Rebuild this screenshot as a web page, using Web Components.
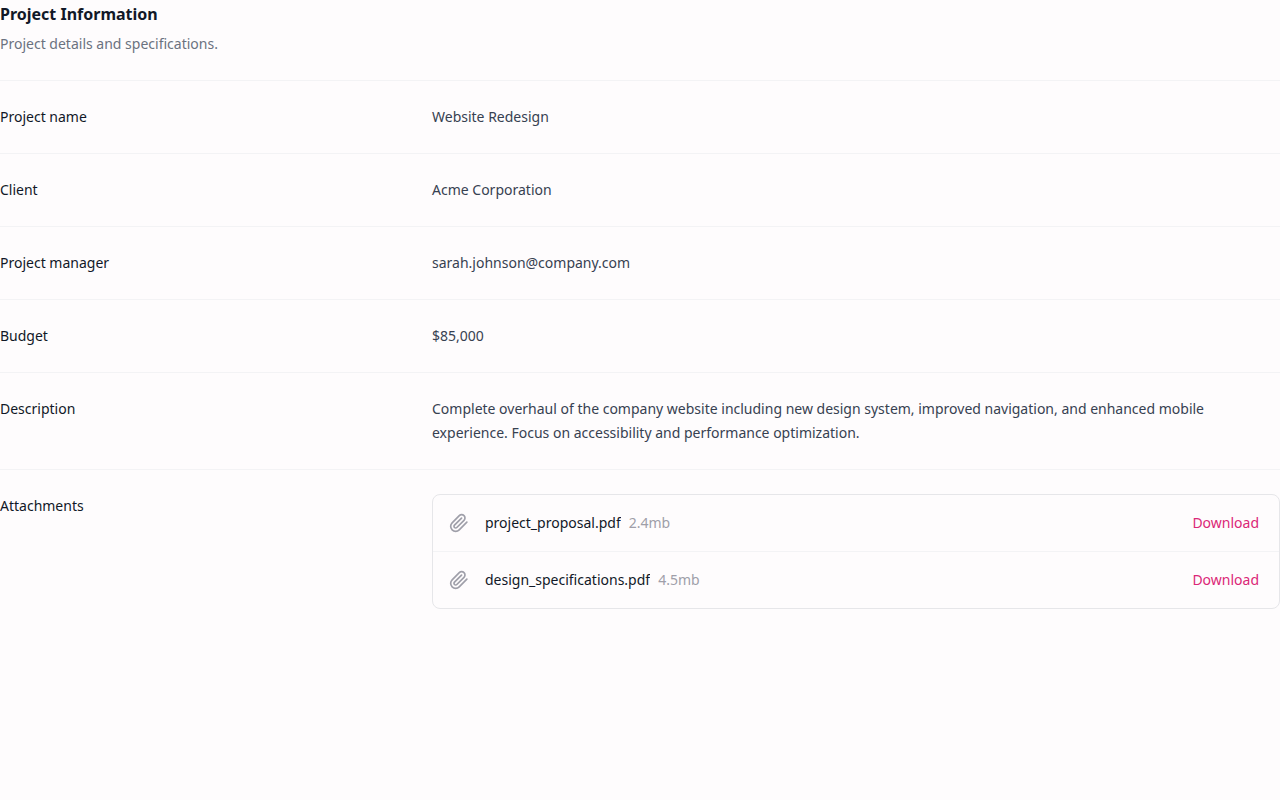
<!DOCTYPE html>
<html lang="en">
<head>
<meta charset="utf-8">
<meta name="viewport" content="width=device-width, initial-scale=1">
<title>Project Information</title>
<style>
  body {
    margin: 0;
    background: #fefcfd;
    color: #101828;
    font: 14px/24px "Noto Sans", sans-serif;
    --text-strong: #111827;
    --text-body: #374151;
    --text-muted: #6b7280;
    --text-faint: #9f9fa9;
    --line: #f3f3f5;
    --line-strong: #e6e6e9;
    --accent: #db2777;
  }
</style>
</head>
<body>
<project-details>
  <span slot="title">Project Information</span>
  <span slot="summary">Project details and specifications.</span>
  <detail-row label="Project name">Website Redesign</detail-row>
  <detail-row label="Client">Acme Corporation</detail-row>
  <detail-row label="Project manager">sarah.johnson@company.com</detail-row>
  <detail-row label="Budget">$85,000</detail-row>
  <detail-row label="Description">Complete overhaul of the company website including new design system, improved navigation, and enhanced mobile experience. Focus on accessibility and performance optimization.</detail-row>
  <detail-row label="Attachments">
    <attachment-list>
      <attachment-item name="project_proposal.pdf" size="2.4mb"></attachment-item>
      <attachment-item name="design_specifications.pdf" size="4.5mb"></attachment-item>
    </attachment-list>
  </detail-row>
</project-details>

<template id="project-details">
  <style>
    :host { display: block; }
    h3 { margin: 0; font-size: 16px; line-height: 28px; font-weight: 700; color: var(--text-strong); }
    p { margin: 4px 0 0; color: var(--text-muted); }
    .rows { margin-top: 24px; }
  </style>
  <header>
    <h3><slot name="title"></slot></h3>
    <p><slot name="summary"></slot></p>
  </header>
  <div class="rows"><slot></slot></div>
</template>

<template id="detail-row">
  <style>
    :host { display: block; border-top: 1px solid var(--line); }
    dl { display: grid; grid-template-columns: repeat(3, minmax(0, 1fr)); gap: 16px; margin: 0; padding: 24px 0; }
    dt { color: var(--text-strong); }
    dd { grid-column: span 2; margin: 0; color: var(--text-body); }
  </style>
  <dl><dt></dt><dd><slot></slot></dd></dl>
</template>

<template id="attachment-list">
  <style>
    :host { display: block; border: 1px solid var(--line-strong); border-radius: 8px; }
    ::slotted(attachment-item:not(:first-child)) { border-top: 1px solid var(--line); }
  </style>
  <div role="list"><slot></slot></div>
</template>

<template id="attachment-item">
  <style>
    :host { display: block; }
    .item { display: flex; align-items: center; gap: 16px; padding: 16px 20px 16px 16px; }
    svg { width: 20px; height: 20px; flex: none; fill: none; stroke: var(--text-faint); stroke-width: 2; stroke-linecap: round; stroke-linejoin: round; }
    .file { display: flex; flex: 1; gap: 8px; min-width: 0; }
    .name { overflow: hidden; text-overflow: ellipsis; white-space: nowrap; color: var(--text-strong); }
    .size { flex: none; color: var(--text-faint); }
    a { flex: none; color: var(--accent); text-decoration: none; }
    a:hover { text-decoration: underline; }
  </style>
  <div class="item" role="listitem">
    <svg viewBox="0 0 24 24" aria-hidden="true"><path d="m21.44 11.05-9.19 9.19a6 6 0 0 1-8.49-8.49l8.57-8.57A4 4 0 1 1 18 8.84l-8.59 8.57a2 2 0 0 1-2.83-2.83l8.49-8.48"/></svg>
    <div class="file"><span class="name"></span><span class="size"></span></div>
    <a href="#">Download</a>
  </div>
</template>

<script>
  class TemplateElement extends HTMLElement {
    constructor() {
      super();
      const template = document.getElementById(this.localName);
      this.attachShadow({ mode: "open" }).append(template.content.cloneNode(true));
    }
  }

  class ProjectDetails extends TemplateElement {}

  class DetailRow extends TemplateElement {
    connectedCallback() {
      this.shadowRoot.querySelector("dt").textContent = this.getAttribute("label");
    }
  }

  class AttachmentList extends TemplateElement {}

  class AttachmentItem extends TemplateElement {
    connectedCallback() {
      const name = this.getAttribute("name");
      this.shadowRoot.querySelector(".name").textContent = name;
      this.shadowRoot.querySelector(".size").textContent = this.getAttribute("size");
      const link = this.shadowRoot.querySelector("a");
      link.href = "#" + name;
      link.setAttribute("aria-label", "Download " + name);
    }
  }

  customElements.define("project-details", ProjectDetails);
  customElements.define("detail-row", DetailRow);
  customElements.define("attachment-list", AttachmentList);
  customElements.define("attachment-item", AttachmentItem);
</script>
</body>
</html>
